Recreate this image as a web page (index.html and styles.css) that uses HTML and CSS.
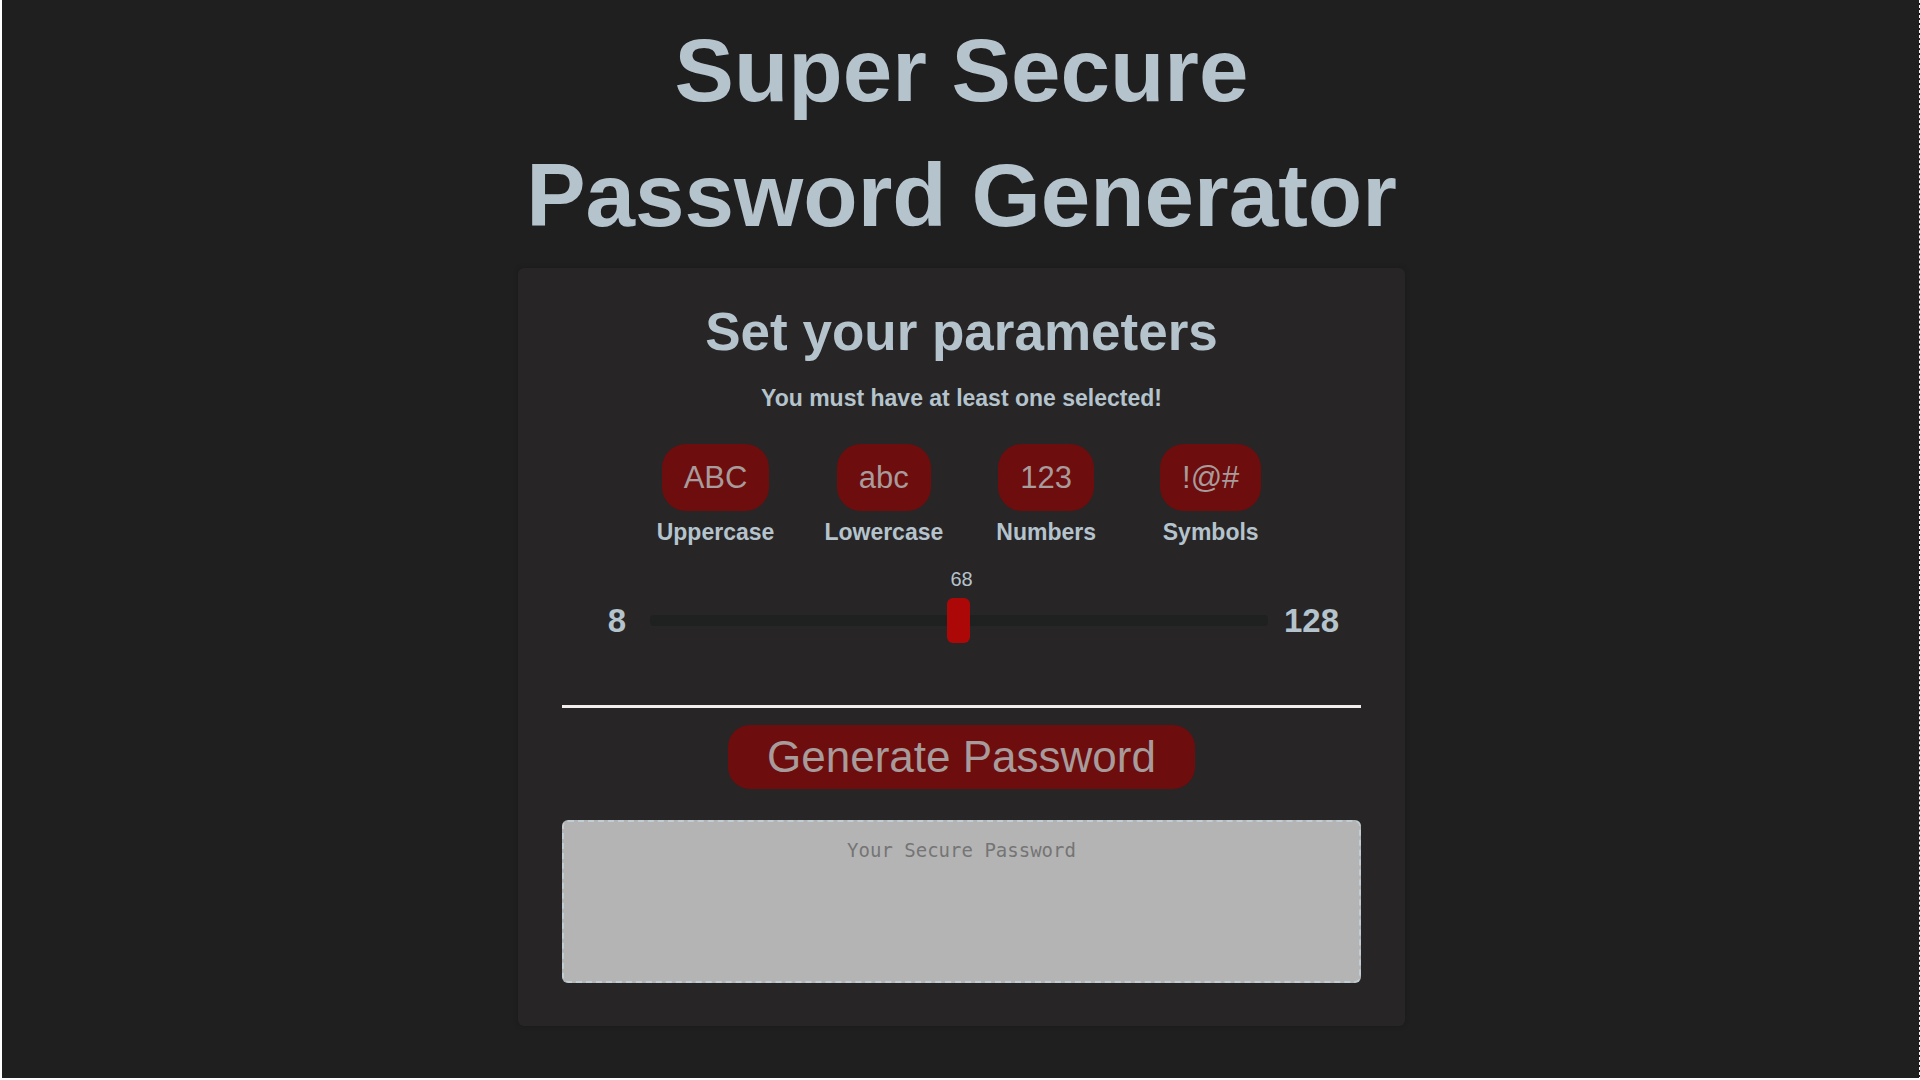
FILE: index.html
```
<!DOCTYPE html>
<html lang="en">
<head>
<meta charset="utf-8">
<meta name="viewport" content="width=device-width, initial-scale=1">
<title>Super Secure Password Generator</title>
<link rel="stylesheet" href="styles.css">
</head>
<body>
<div class="page">
  <header class="page-header">
    <h1 class="title">Super Secure<br>Password Generator</h1>
  </header>
  <main class="card">
    <h2 class="subtitle">Set your parameters</h2>
    <p class="hint">You must have at least one selected!</p>
    <div class="options">
      <div class="option">
        <button type="button" class="toggle" aria-labelledby="upper">ABC</button>
        <span id="upper" class="option-label">Uppercase</span>
      </div>
      <div class="option">
        <button type="button" class="toggle" aria-labelledby="lower">abc</button>
        <span id="lower" class="option-label">Lowercase</span>
      </div>
      <div class="option">
        <button type="button" class="toggle" aria-labelledby="numbers">123</button>
        <span id="numbers" class="option-label">Numbers</span>
      </div>
      <div class="option">
        <button type="button" class="toggle" aria-labelledby="symbols">!@#</button>
        <span id="symbols" class="option-label">Symbols</span>
      </div>
    </div>
    <label class="length-value" for="length">68</label>
    <div class="length-row">
      <span class="bound bound-min">8</span>
      <input class="slider" id="length" type="range" min="8" max="128" value="68">
      <span class="bound">128</span>
    </div>
    <hr class="divider">
    <button type="button" class="generate">Generate Password</button>
    <textarea class="result" aria-label="Your Secure Password" placeholder="Your Secure Password" readonly></textarea>
  </main>
</div>
</body>
</html>
```
FILE: styles.css
```
* {
  box-sizing: border-box;
}

body {
  margin: 0;
  background: #1f1f1f;
  color: #b5c3cc;
  font-family: "Liberation Sans", Arial, sans-serif;
}

.page {
  min-height: 100vh;
  padding: 8px 0 48px 2px;
  border-left: 2px solid #fff;
  border-bottom: 2px solid #fff;
  border-right: 1px dashed #fff;
}

.title {
  margin: 0 0 10px;
  font-size: 89px;
  line-height: 125px;
  text-align: center;
}

.card {
  display: flex;
  flex-direction: column;
  align-items: center;
  width: 100%;
  max-width: 887px;
  margin: 0 auto;
  padding: 26px 44px 43px;
  border-radius: 6px;
  background: #272526;
  box-shadow: 0 0 4px #1a1a1a;
}

.subtitle {
  margin: 0 0 12px;
  font-size: 53px;
  line-height: 76px;
  text-align: center;
}

.hint {
  margin: 0 0 30px;
  font-size: 23px;
  font-weight: bold;
  line-height: 32px;
}

.options {
  display: flex;
  flex-wrap: wrap;
  justify-content: center;
  gap: 44px;
}

.option {
  display: flex;
  flex-direction: column;
  align-items: center;
  gap: 5px;
}

.toggle,
.generate {
  border: 0;
  background: #6e0d0d;
  color: #a79b9b;
  font-family: inherit;
}

.toggle {
  height: 67px;
  margin: 0 11px;
  padding: 0 22px;
  border-radius: 24px;
  font-size: 31px;
}

.option-label {
  font-size: 23px;
  font-weight: bold;
  line-height: 32px;
}

.length-value {
  margin-top: 15px;
  font-size: 20px;
  line-height: 32px;
}

.length-row {
  display: flex;
  align-items: center;
  gap: 16px;
  width: 100%;
  height: 45px;
  margin: 3px 0 62px;
  padding: 0 22px;
}

.bound {
  font-size: 33px;
  font-weight: bold;
}

.bound-min {
  width: 50px;
  padding-right: 8px;
  text-align: right;
}

.slider {
  flex: 1;
  min-width: 0;
  height: 11px;
  margin: 0;
  border-radius: 4px;
  background: #1f2020;
  appearance: none;
}

.slider::-webkit-slider-thumb {
  width: 23px;
  height: 45px;
  border-radius: 6px;
  background: #ad0808;
  appearance: none;
}

.divider {
  width: 100%;
  height: 3px;
  margin: 0 0 17px;
  border: 0;
  background: #f3eeee;
}

.generate {
  height: 64px;
  margin: 0 0 31px;
  padding: 0 39px;
  border-radius: 22px;
  font-size: 44px;
}

.result {
  display: block;
  width: 100%;
  height: 163px;
  padding: 17px 22px;
  border: 2px dashed #c1cdd4;
  border-radius: 6px;
  background: #b4b4b4;
  color: #333;
  font-family: "DejaVu Sans Mono", monospace;
  font-size: 19px;
  line-height: 22px;
  text-align: center;
  resize: none;
}

.result::placeholder {
  color: #757575;
}
```
